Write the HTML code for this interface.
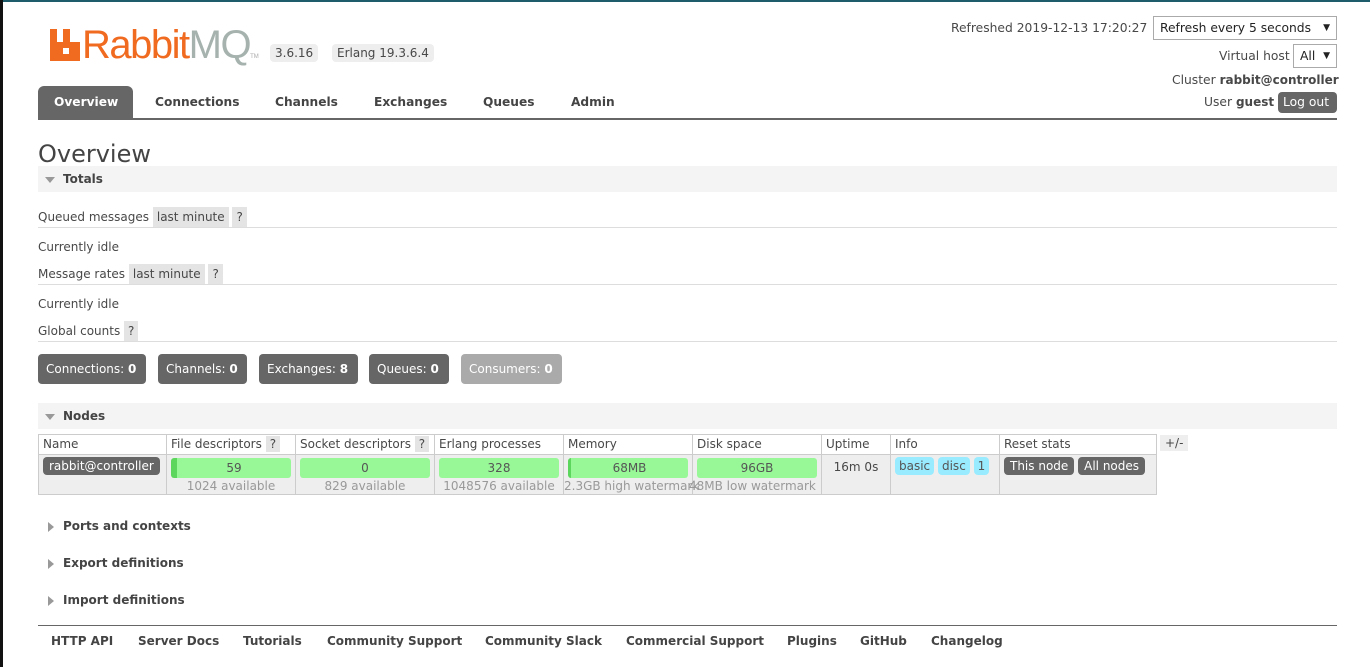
<!DOCTYPE html>
<html><head><meta charset="utf-8"><style>
*{box-sizing:border-box}
body{margin:0;width:1370px;height:667px;background:#fff;font-family:"DejaVu Sans","Liberation Sans",sans-serif;font-size:12px;color:#484848;position:relative;overflow:hidden}
.a{position:absolute;white-space:nowrap}
.pill{background:#eee;border-radius:4px;padding:2px 5px}
.lm{background:#e4e4e4;padding:3px 4px}
.q{background:#e4e4e4;padding:3px 4px}
.hr{position:absolute;left:38px;width:1299px;height:1px;background:#ddd}
.sec{position:absolute;left:38px;width:1299px;height:26px;background:#f4f4f4;font-weight:bold;font-size:12px;color:#444;padding:6px 0 0 25px}
.tri{position:absolute;left:7px;top:11px;width:0;height:0;border-left:5px solid transparent;border-right:5px solid transparent;border-top:6px solid #999}
.trr{position:absolute;left:10px;width:0;height:0;border-top:5px solid transparent;border-bottom:5px solid transparent;border-left:6px solid #999}
.btn{position:absolute;top:354px;height:30px;background:#666;color:#fff;border-radius:4px;font-size:12px;padding:8px 8px 0;white-space:nowrap}
.nav{position:absolute;top:95px;font-weight:bold;font-size:12.2px;color:#444;white-space:nowrap}
td{border:1px solid #ccc;padding:0 4px;height:20px;white-space:nowrap;vertical-align:top;overflow:visible}
table{border-collapse:collapse;position:absolute;left:38px;top:434px;font-size:12px;table-layout:fixed;width:1118px}
.bar{background:#98f898;border-radius:3px;height:20px;text-align:center;line-height:20px;margin-top:3px;color:#555}
.sub{color:#999;text-align:center;line-height:16px}
.bl{background:#99ebff;border-radius:4px;padding:2px 4px;color:#555}
.db{background:#666;color:#fff;border-radius:4px;padding:2px 6px}
.foot{position:absolute;top:634px;font-weight:bold;font-size:12px;color:#444;white-space:nowrap}
.sm{font-size:12.3px}
</style></head><body>
<div class="a" style="left:0;top:0;width:1370px;height:2px;background:#1e5b6b"></div>
<div class="a" style="left:0;top:0;width:3px;height:667px;background:#111"></div>
<div class="a" style="left:50px;top:29px;width:30px;height:32px">
<svg width="30" height="32" viewBox="0 0 30 32"><path d="M0 0h7v13h6V0h7v13h10V32H0z" fill="#f06a20"/><rect x="13" y="19" width="6" height="6" fill="#fff"/></svg></div>
<div class="a" style="left:82px;top:22px;font-family:'Liberation Sans',sans-serif;font-size:40px;letter-spacing:-1.5px;color:#f06a20;line-height:46px">Rabbit<span style="color:#a5b2ae">MQ</span><span style="font-size:6px;color:#aaa;letter-spacing:0">TM</span></div>
<div class="a pill" style="left:270px;top:44px">3.6.16</div>
<div class="a pill" style="left:332px;top:44px">Erlang 19.3.6.4</div>
<div class="a sm" style="left:951px;top:21px">Refreshed 2019-12-13 17:20:27</div>
<div class="a sm" style="left:1153px;top:16px;width:184px;height:24px;border:1px solid #aaa;color:#222;padding:4px 6px">Refresh every 5 seconds<span style="position:absolute;right:6px;font-size:9px;top:6px">▼</span></div>
<div class="a sm" style="left:1219px;top:49px">Virtual host</div>
<div class="a sm" style="left:1293px;top:44px;width:44px;height:24px;border:1px solid #aaa;color:#222;padding:4px 6px">All<span style="position:absolute;right:6px;font-size:9px;top:6px">▼</span></div>
<div class="a sm" style="left:1172px;top:73px">Cluster <b style="font-size:12px">rabbit@controller</b></div>
<div class="a sm" style="left:1204px;top:95px">User <b style="font-size:12px">guest</b></div>
<div class="a sm" style="left:1278px;top:92px;width:59px;height:21px;background:#666;color:#fff;border-radius:4px;padding:3px 5px">Log out</div>
<div class="a" style="left:38px;top:86px;width:95px;height:32px;background:#666;border-radius:6px 6px 0 0"></div>
<div class="nav" style="left:54px;color:#fff">Overview</div>
<div class="nav" style="left:155px">Connections</div>
<div class="nav" style="left:275px">Channels</div>
<div class="nav" style="left:374px">Exchanges</div>
<div class="nav" style="left:483px">Queues</div>
<div class="nav" style="left:571px">Admin</div>
<div class="a" style="left:38px;top:118px;width:1299px;height:2px;background:#666"></div>
<div class="a" style="left:38px;top:140px;font-size:24px;color:#444">Overview</div>
<div class="sec" style="top:166px"><div class="tri"></div>Totals</div>
<div class="a" style="left:38px;top:207px;line-height:20px">Queued messages <span class="lm">last minute</span> <span class="q">?</span></div>
<div class="hr" style="top:227px"></div>
<div class="a" style="left:38px;top:240px">Currently idle</div>
<div class="a" style="left:38px;top:264px;line-height:20px">Message rates <span class="lm">last minute</span> <span class="q">?</span></div>
<div class="hr" style="top:284px"></div>
<div class="a" style="left:38px;top:297px">Currently idle</div>
<div class="a" style="left:38px;top:321px;line-height:20px">Global counts <span class="q">?</span></div>
<div class="hr" style="top:341px"></div>
<div class="btn" style="left:38px;width:108px">Connections: <b>0</b></div>
<div class="btn" style="left:158px;width:89px">Channels: <b>0</b></div>
<div class="btn" style="left:259px;width:99px">Exchanges: <b>8</b></div>
<div class="btn" style="left:369px;width:80px">Queues: <b>0</b></div>
<div class="btn" style="left:461px;width:101px;background:#aaa">Consumers: <b>0</b></div>
<div class="sec" style="top:403px"><div class="tri"></div>Nodes</div>
<table>
<colgroup><col style="width:128px"><col style="width:129px"><col style="width:139px"><col style="width:129px"><col style="width:129px"><col style="width:129px"><col style="width:69px"><col style="width:109px"><col style="width:157px"></colgroup>
<tr style="background:#fff"><td style="padding-top:2px">Name</td><td style="padding-top:2px">File descriptors <span class="q" style="padding:1px 4px">?</span></td><td style="padding-top:2px">Socket descriptors <span class="q" style="padding:1px 4px">?</span></td><td style="padding-top:2px">Erlang processes</td><td style="padding-top:2px">Memory</td><td style="padding-top:2px">Disk space</td><td style="padding-top:2px">Uptime</td><td style="padding-top:2px">Info</td><td style="padding-top:2px">Reset stats</td></tr>
<tr style="background:#eee;height:40px"><td style="padding-top:4px"><span class="db">rabbit@controller</span></td>
<td><div class="bar" style="border-left:6px solid #5cd65c">59</div><div class="sub">1024 available</div></td>
<td><div class="bar">0</div><div class="sub">829 available</div></td>
<td><div class="bar">328</div><div class="sub">1048576 available</div></td>
<td><div class="bar" style="border-left:3px solid #5cd65c">68MB</div><div class="sub" style="text-align:left;margin-left:-4px">2.3GB high watermark</div></td>
<td><div class="bar">96GB</div><div class="sub" style="text-align:left;margin-left:-8px">48MB low watermark</div></td>
<td style="text-align:center;padding-top:5px">16m 0s</td>
<td style="padding-top:4px"><span class="bl">basic</span> <span class="bl">disc</span> <span class="bl">1</span></td>
<td style="padding-top:4px"><span class="db">This node</span> <span class="db">All nodes</span></td></tr>
</table>
<div class="a" style="left:1160px;top:435px;background:#eee;padding:1px 5px;font-size:12px">+/-</div>
<div class="a" style="left:38px;top:519px;font-weight:bold;font-size:12px;color:#444;padding-left:25px"><div class="trr" style="top:3px"></div>Ports and contexts</div>
<div class="a" style="left:38px;top:556px;font-weight:bold;font-size:12px;color:#444;padding-left:25px"><div class="trr" style="top:3px"></div>Export definitions</div>
<div class="a" style="left:38px;top:593px;font-weight:bold;font-size:12px;color:#444;padding-left:25px"><div class="trr" style="top:3px"></div>Import definitions</div>
<div class="a" style="left:38px;top:625px;width:1299px;height:1px;background:#666"></div>
<div class="foot" style="left:51px">HTTP API</div>
<div class="foot" style="left:138px">Server Docs</div>
<div class="foot" style="left:243px">Tutorials</div>
<div class="foot" style="left:327px">Community Support</div>
<div class="foot" style="left:485px">Community Slack</div>
<div class="foot" style="left:626px">Commercial Support</div>
<div class="foot" style="left:787px">Plugins</div>
<div class="foot" style="left:860px">GitHub</div>
<div class="foot" style="left:931px">Changelog</div>
</body></html>
